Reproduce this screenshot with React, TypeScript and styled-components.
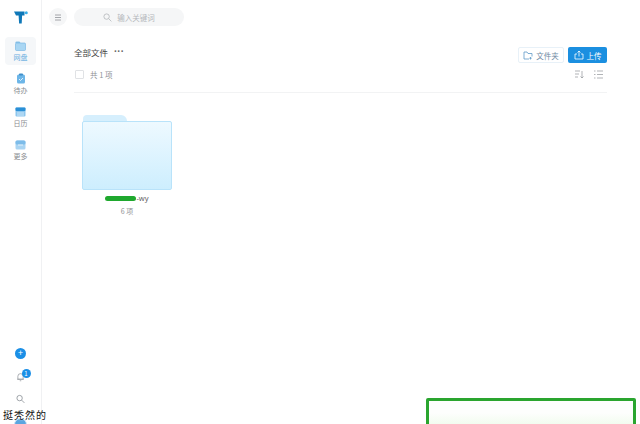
import styled, { createGlobalStyle } from 'styled-components';

const GlobalStyle = createGlobalStyle`
    html, body {
        margin: 0;
        padding: 0;
        background: #fff;
        overflow: hidden;
    }
    #root {
        width: 640px;
        height: 424px;
    }
    svg {
        display: block;
    }
`
const Page = styled.div`
    position: relative;
    width: 640px;
    height: 424px;
    display: flex;
    overflow: hidden;
    font-family: "Noto Sans CJK SC", "Noto Sans", sans-serif;
    color: #333;
`
const Sidebar = styled.div`
    width: 41px;
    height: 424px;
    flex: none;
    border-right: 1px solid #f0f1f3;
    display: flex;
    flex-direction: column;
    align-items: center;
`
const Logo = styled.svg`
    width: 14px;
    height: 13px;
    margin-top: 11px;
    margin-bottom: 13px;
`
const NavItem = styled.div<{ $active?: boolean }>`
    width: 31px;
    height: 28px;
    margin-bottom: 5px;
    border-radius: 4px;
    background: ${p => (p.$active ? '#f5f7f9' : 'transparent')};
    display: flex;
    flex-direction: column;
    align-items: center;
    justify-content: center;
    gap: 2px;
`
const NavLabel = styled.div<{ $active?: boolean }>`
    font-size: 7px;
    line-height: 9px;
    color: ${p => (p.$active ? '#6aaee0' : '#8a8d91')};
`
const SideBottom = styled.div`
    margin-top: auto;
    display: flex;
    flex-direction: column;
    align-items: center;
    gap: 11px;
    margin-bottom: -7px;
`
const AddButton = styled.div`
    width: 11px;
    height: 11px;
    border-radius: 50%;
    background: #1b8fe6;
    color: #fff;
    font-size: 9px;
    line-height: 10px;
    text-align: center;
`
const Bell = styled.div`
    position: relative;
    width: 12px;
    height: 13px;
    display: flex;
    align-items: center;
    justify-content: center;
`
const Badge = styled.div`
    position: absolute;
    top: -1px;
    right: -4px;
    width: 9px;
    height: 9px;
    border-radius: 50%;
    background: #1b8fe6;
    color: #fff;
    font-size: 6px;
    line-height: 9px;
    text-align: center;
`
const Avatar = styled.div`
    width: 13px;
    height: 13px;
    margin-top: 3px;
    border-radius: 50%;
    background: #5aa5e0;
    border: 1px solid #cfe4f5;
    box-sizing: border-box;
`
const Main = styled.div`
    flex: 1;
    min-width: 0;
    display: flex;
    flex-direction: column;
`
const TopBar = styled.div`
    display: flex;
    align-items: center;
    gap: 7px;
    padding: 8px 0 0 7px;
`
const MenuButton = styled.div`
    width: 18px;
    height: 18px;
    border-radius: 50%;
    background: #f5f6f7;
    display: flex;
    align-items: center;
    justify-content: center;
`
const SearchBox = styled.div`
    width: 110px;
    height: 18px;
    border-radius: 9px;
    background: #f5f6f7;
    display: flex;
    align-items: center;
    justify-content: center;
    gap: 5px;
    font-size: 7.5px;
    color: #b4b7bb;
`
const Content = styled.div`
    margin: 0 33px 0 32px;
`
const TitleRow = styled.div`
    display: flex;
    align-items: center;
    justify-content: space-between;
    margin-top: 13px;
    height: 26px;
`
const TitleLeft = styled.div`
    display: flex;
    align-items: center;
    gap: 6px;
    font-size: 8.5px;
    color: #444;
`
const Dots = styled.span`
    font-family: "Liberation Sans", sans-serif;
    font-size: 10px;
    line-height: 8px;
    color: #666;
    font-weight: 700;
`
const Actions = styled.div`
    display: flex;
    gap: 4px;
    margin-top: 6px;
`
const ActionButton = styled.div<{ $primary?: boolean }>`
    height: 16px;
    border-radius: 2px;
    box-sizing: border-box;
    display: flex;
    align-items: center;
    justify-content: center;
    gap: 3px;
    font-size: 7.5px;
    width: ${p => (p.$primary ? '39px' : '46px')};
    background: ${p => (p.$primary ? '#1b8fe0' : '#fff')};
    color: ${p => (p.$primary ? '#fff' : '#6f8ba3')};
    border: ${p => (p.$primary ? 'none' : '1px solid #e8f1f8')};
`
const InfoRow = styled.div`
    display: flex;
    align-items: center;
    justify-content: space-between;
    height: 17px;
    margin-top: 1px;
    padding-bottom: 9px;
    border-bottom: 1px solid #f2f3f4;
`
const SelectAll = styled.div`
    display: flex;
    align-items: center;
    gap: 6px;
    font-size: 7.5px;
    color: #8f9296;
    margin-left: 1px;
`
const CheckBox = styled.div`
    width: 7px;
    height: 7px;
    border: 1px solid #e0e2e5;
    border-radius: 1px;
`
const ViewTools = styled.div`
    display: flex;
    gap: 10px;
    margin-right: 4px;
`
const FileCard = styled.div`
    width: 92px;
    margin: 22px 0 0 7px;
    display: flex;
    flex-direction: column;
    align-items: center;
`
const FolderBack = styled.div`
    align-self: flex-start;
    width: 44px;
    height: 7px;
    margin: 0 0 -1px 2px;
    border-radius: 4px 6px 0 0;
    background: #d6effd;
`
const FolderFront = styled.div`
    width: 90px;
    height: 69px;
    box-sizing: border-box;
    border: 1px solid #b9e3fa;
    border-radius: 2px;
    background: linear-gradient(#eef9ff, #cdeefe);
`
const FileName = styled.div`
    display: flex;
    align-items: center;
    margin-top: 3px;
    height: 10px;
    font-family: "Noto Sans", sans-serif;
    font-size: 7.5px;
    color: #666;
`
const Redaction = styled.span`
    width: 31px;
    height: 5px;
    border-radius: 3px;
    background: #1fa82e;
`
const FileMeta = styled.div`
    margin-top: 3px;
    font-size: 7px;
    line-height: 10px;
    color: #8f9296;
`
const Watermark = styled.div`
    position: absolute;
    left: 3px;
    bottom: 3px;
    font-size: 10px;
    line-height: 13px;
    letter-spacing: 1px;
    color: #111;
    text-shadow: 0 0 2px #fff;
`
const Annotation = styled.div`
    position: absolute;
    left: 426px;
    top: 398px;
    width: 210px;
    height: 40px;
    box-sizing: border-box;
    border: 3px solid #2aa52f;
    border-radius: 2px;
    background: linear-gradient(#fdfefd 0, #fdfefd 12px, #f1fcee 24px);
`

const App = () => {
    return <Page>
        <GlobalStyle />
        <Sidebar>
            <Logo viewBox="0 0 14 13">
                <path d="M0 0.500h10.500v4h-2.400l-0.400 8h-2.600l-0.500-8h-2.600z" fill="#0f78b8" />
                <circle cx="12.300" cy="1.700" r="1.500" fill="#37aee8" />
            </Logo>
            <NavItem $active>
                <svg width="11" height="10" viewBox="0 0 11 10">
                    <path d="M0.500 1.500a1 1 0 0 1 1-1h3l1 1.500h-5.500z" fill="#8cc4ea" />
                    <rect x="0.500" y="2" width="10" height="7.500" rx="1" fill="#a9d6f3" stroke="#6fb2e2" strokeWidth="0.6" />
                </svg>
                <NavLabel $active>网盘</NavLabel>
            </NavItem>
            <NavItem>
                <svg width="10" height="11" viewBox="0 0 10 11">
                    <rect x="1" y="1.500" width="8" height="9" rx="1.500" fill="#6db6e8" />
                    <rect x="3" y="0.500" width="4" height="2" rx="0.800" fill="#3f8fca" />
                    <path d="M3 6l1.500 1.500 2.500-2.500" stroke="#fff" strokeWidth="0.8" fill="none" />
                </svg>
                <NavLabel>待办</NavLabel>
            </NavItem>
            <NavItem>
                <svg width="11" height="10" viewBox="0 0 11 10">
                    <rect x="0.500" y="0.500" width="10" height="9" rx="1" fill="#8cc6ee" />
                    <rect x="0.500" y="0.500" width="10" height="3.500" rx="1" fill="#2a8fd6" />
                    <path d="M2 6h7M2 8h7" stroke="#fff" strokeWidth="0.6" />
                </svg>
                <NavLabel>日历</NavLabel>
            </NavItem>
            <NavItem>
                <svg width="11" height="10" viewBox="0 0 11 10">
                    <rect x="0.500" y="0.500" width="10" height="9" rx="1.500" fill="#a9d4f2" />
                    <rect x="0.500" y="0.500" width="10" height="4" rx="1.500" fill="#7dbce9" />
                    <path d="M3 5h5" stroke="#fff" strokeWidth="0.7" />
                </svg>
                <NavLabel>更多</NavLabel>
            </NavItem>
            <SideBottom>
                <AddButton>+</AddButton>
                <Bell>
                    <svg width="9" height="10" viewBox="0 0 12 13" fill="none" stroke="#9a9ea4" strokeWidth="1.100">
                        <path d="M2.500 9.500v-4a3.500 3.500 0 0 1 7 0v4zM1.500 9.500h9M5 11.500h2" />
                    </svg>
                    <Badge>1</Badge>
                </Bell>
                <svg width="9" height="10" viewBox="0 0 10 10" fill="none" stroke="#8a8f96" strokeWidth="0.9">
                    <circle cx="4" cy="4" r="3" />
                    <path d="M6.300 6.300l3 3" />
                </svg>
                <Avatar />
            </SideBottom>
        </Sidebar>
        <Main>
            <TopBar>
                <MenuButton>
                    <svg width="8" height="7" viewBox="0 0 8 7" stroke="#8f9398" strokeWidth="0.8">
                        <path d="M1 1h6M1 3.500h6M1 6h6" />
                    </svg>
                </MenuButton>
                <SearchBox>
                    <svg width="9" height="9" viewBox="0 0 10 10" fill="none" stroke="#b4b7bb" strokeWidth="0.9">
                        <circle cx="4" cy="4" r="3" />
                        <path d="M6.300 6.300l3 3" />
                    </svg>
                    输入关键词
                </SearchBox>
            </TopBar>
            <Content>
                <TitleRow>
                    <TitleLeft>全部文件 <Dots>···</Dots></TitleLeft>
                    <Actions>
                        <ActionButton>
                            <svg width="10" height="9" viewBox="0 0 10 9" fill="none" stroke="#5f9ac8" strokeWidth="0.8">
                                <path d="M9 5.500V2.500H5L4 1H1v7h5M7.500 6v2.500M6.300 7.200h2.400" />
                            </svg>
                            文件夹
                        </ActionButton>
                        <ActionButton $primary>
                            <svg width="10" height="10" viewBox="0 0 10 10" fill="none" stroke="#fff" strokeWidth="0.8">
                                <path d="M3 4H1v5h8V4H7M5 6.500V1M3.500 2.500L5 1l1.500 1.500" />
                            </svg>
                            上传
                        </ActionButton>
                    </Actions>
                </TitleRow>
                <InfoRow>
                    <SelectAll><CheckBox />共 1 项</SelectAll>
                    <ViewTools>
                        <svg width="9" height="9" viewBox="0 0 9 9" fill="none" stroke="#8f9398" strokeWidth="0.7">
                            <path d="M0 1h5M0 4h4M0 7h3M7 1v7M5.500 6.500L7 8l1.500-1.500" />
                        </svg>
                        <svg width="9" height="9" viewBox="0 0 9 9" fill="none" stroke="#8f9398" strokeWidth="0.7">
                            <path d="M0 1h1.500M0 4.500h1.500M0 8h1.500M3 1h6M3 4.500h6M3 8h6" />
                        </svg>
                    </ViewTools>
                </InfoRow>
                <FileCard>
                    <FolderBack />
                    <FolderFront />
                    <FileName><Redaction />-wy</FileName>
                    <FileMeta>6 项</FileMeta>
                </FileCard>
            </Content>
        </Main>
        <Watermark>挺秃然的</Watermark>
        <Annotation />
    </Page>;
}

export default App;
